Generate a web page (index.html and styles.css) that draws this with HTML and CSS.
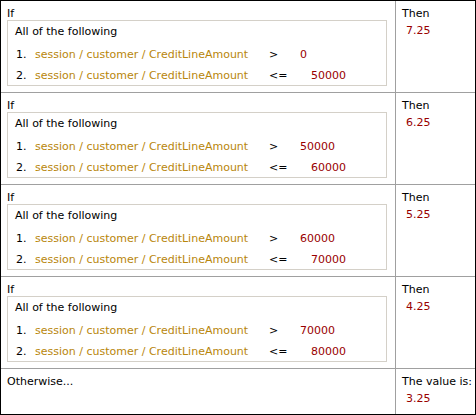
FILE: index.html
```html
<!DOCTYPE html>
<html>
<head>
<meta charset="utf-8">
<link rel="stylesheet" href="styles.css">
</head>
<body>
<div class="table">
  <div class="row">
    <div class="cond">
      <div class="line">If</div>
      <div class="group">
        <div class="line">All of the following</div>
        <div class="item first"><span class="num">1.</span><span class="path">session / customer / CreditLineAmount</span><span class="op gt">&gt;</span><span class="val">0</span></div>
        <div class="item"><span class="num">2.</span><span class="path">session / customer / CreditLineAmount</span><span class="op le">&lt;=</span><span class="val">50000</span></div>
      </div>
    </div>
    <div class="res"><div class="line">Then</div><div class="val result">7.25</div></div>
  </div>
  <div class="row">
    <div class="cond">
      <div class="line">If</div>
      <div class="group">
        <div class="line">All of the following</div>
        <div class="item first"><span class="num">1.</span><span class="path">session / customer / CreditLineAmount</span><span class="op gt">&gt;</span><span class="val">50000</span></div>
        <div class="item"><span class="num">2.</span><span class="path">session / customer / CreditLineAmount</span><span class="op le">&lt;=</span><span class="val">60000</span></div>
      </div>
    </div>
    <div class="res"><div class="line">Then</div><div class="val result">6.25</div></div>
  </div>
  <div class="row">
    <div class="cond">
      <div class="line">If</div>
      <div class="group">
        <div class="line">All of the following</div>
        <div class="item first"><span class="num">1.</span><span class="path">session / customer / CreditLineAmount</span><span class="op gt">&gt;</span><span class="val">60000</span></div>
        <div class="item"><span class="num">2.</span><span class="path">session / customer / CreditLineAmount</span><span class="op le">&lt;=</span><span class="val">70000</span></div>
      </div>
    </div>
    <div class="res"><div class="line">Then</div><div class="val result">5.25</div></div>
  </div>
  <div class="row">
    <div class="cond">
      <div class="line">If</div>
      <div class="group">
        <div class="line">All of the following</div>
        <div class="item first"><span class="num">1.</span><span class="path">session / customer / CreditLineAmount</span><span class="op gt">&gt;</span><span class="val">70000</span></div>
        <div class="item"><span class="num">2.</span><span class="path">session / customer / CreditLineAmount</span><span class="op le">&lt;=</span><span class="val">80000</span></div>
      </div>
    </div>
    <div class="res"><div class="line">Then</div><div class="val result">4.25</div></div>
  </div>
  <div class="row last">
    <div class="cond"><div class="line">Otherwise...</div></div>
    <div class="res"><div class="line">The value is:</div><div class="val result">3.25</div></div>
  </div>
</div>
</body>
</html>
```
FILE: styles.css
```css
html, body {
  margin: 0;
  padding: 0;
  background: #fff;
}
body {
  font-family: "DejaVu Sans", Verdana, sans-serif;
  font-size: 11px;
  line-height: 13px;
  color: #000;
}
.table {
  width: 476px;
  height: 415px;
  box-sizing: border-box;
  border: 1px solid #000;
  display: flex;
  flex-direction: column;
}
.row {
  display: grid;
  grid-template-columns: 395px 1fr;
  height: 92px;
  flex: 0 0 92px;
  box-sizing: border-box;
  border-bottom: 1px solid #a0a0a0;
}
.row.last {
  flex: 1 1 auto;
  border-bottom: none;
}
.cond {
  border-right: 1px solid #a0a0a0;
  padding: 6px 8px 0 6px;
}
.res {
  padding: 6px 0 0 6px;
}
.line {
  height: 13px;
  white-space: nowrap;
}
.group {
  border: 1px solid #d4d0c8;
  padding: 4px 7px 3px 7px;
}
.item {
  display: flex;
  height: 13px;
  margin-top: 8px;
  white-space: nowrap;
}
.item.first {
  margin-top: 10px;
}
.num {
  width: 20px;
  padding-left: 1px;
  box-sizing: border-box;
}
.path {
  color: #b8860b;
  width: 234px;
}
.op {
  display: inline-block;
}
.op.gt { width: 31px; }
.op.le { width: 42px; }
.val {
  color: #990000;
}
.result {
  margin-top: 4px;
  padding-left: 4px;
  height: 13px;
}
```
